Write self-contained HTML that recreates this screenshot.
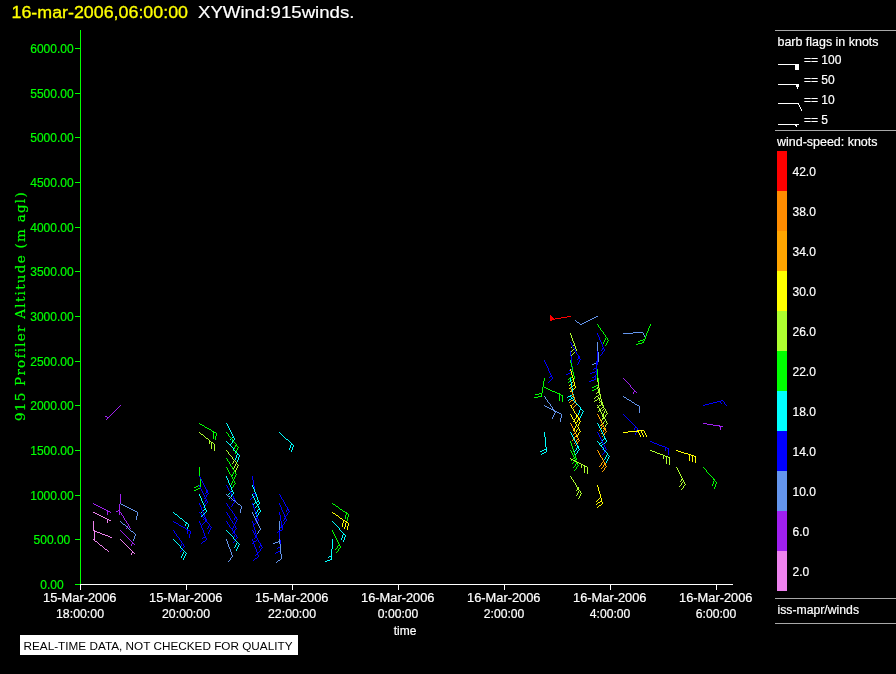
<!DOCTYPE html>
<html><head><meta charset="utf-8"><title>XYWind:915winds</title>
<style>
html,body{margin:0;padding:0;background:#000;}
body{width:896px;height:674px;overflow:hidden;position:relative;font-family:"Liberation Sans",sans-serif;}
svg{position:absolute;left:0;top:0;display:block;will-change:transform;}
text{font-family:"Liberation Sans",sans-serif;font-size:12px;}
.t{fill:#fff;stroke:#fff;stroke-width:0.2px}
.g{fill:#00ff00;stroke:#00ff00;stroke-width:0.2px}
.ser{font-family:"DejaVu Serif","Liberation Serif",serif;}
</style></head><body>
<svg width="896" height="674" viewBox="0 0 896 674">
<rect x="0" y="0" width="896" height="674" fill="#000"/>

<text x="11.5" y="18" textLength="176.5" lengthAdjust="spacingAndGlyphs" style="font-size:17.3px" fill="#ffff00" stroke="#ffff00" stroke-width="0.3">16-mar-2006,06:00:00</text>
<text x="198" y="18" textLength="156.5" lengthAdjust="spacingAndGlyphs" style="font-size:17.3px" fill="#fff" stroke="#fff" stroke-width="0.2">XYWind:915winds.</text>
<g shape-rendering="crispEdges">
<rect x="80" y="30" width="1" height="555" fill="#00ff00"/>
<rect x="75" y="584" width="5" height="1" fill="#00ff00"/>
<rect x="75" y="539" width="5" height="1" fill="#00ff00"/>
<rect x="75" y="495" width="5" height="1" fill="#00ff00"/>
<rect x="75" y="450" width="5" height="1" fill="#00ff00"/>
<rect x="75" y="405" width="5" height="1" fill="#00ff00"/>
<rect x="75" y="361" width="5" height="1" fill="#00ff00"/>
<rect x="75" y="316" width="5" height="1" fill="#00ff00"/>
<rect x="75" y="271" width="5" height="1" fill="#00ff00"/>
<rect x="75" y="227" width="5" height="1" fill="#00ff00"/>
<rect x="75" y="182" width="5" height="1" fill="#00ff00"/>
<rect x="75" y="137" width="5" height="1" fill="#00ff00"/>
<rect x="75" y="93" width="5" height="1" fill="#00ff00"/>
<rect x="75" y="48" width="5" height="1" fill="#00ff00"/>
<rect x="80" y="584" width="653" height="1" fill="#fff"/>
<rect x="80" y="584" width="1" height="6" fill="#fff"/>
<rect x="186" y="584" width="1" height="6" fill="#fff"/>
<rect x="292" y="584" width="1" height="6" fill="#fff"/>
<rect x="398" y="584" width="1" height="6" fill="#fff"/>
<rect x="504" y="584" width="1" height="6" fill="#fff"/>
<rect x="610" y="584" width="1" height="6" fill="#fff"/>
<rect x="716" y="584" width="1" height="6" fill="#fff"/>
</g>
<text class="g" x="51.9" y="588.5" text-anchor="middle">0.00</text>
<text class="g" x="51.9" y="543.5" text-anchor="middle">500.00</text>
<text class="g" x="51.9" y="499.5" text-anchor="middle">1000.00</text>
<text class="g" x="51.9" y="454.5" text-anchor="middle">1500.00</text>
<text class="g" x="51.9" y="409.5" text-anchor="middle">2000.00</text>
<text class="g" x="51.9" y="365.5" text-anchor="middle">2500.00</text>
<text class="g" x="51.9" y="320.5" text-anchor="middle">3000.00</text>
<text class="g" x="51.9" y="275.5" text-anchor="middle">3500.00</text>
<text class="g" x="51.9" y="231.5" text-anchor="middle">4000.00</text>
<text class="g" x="51.9" y="186.5" text-anchor="middle">4500.00</text>
<text class="g" x="51.9" y="141.5" text-anchor="middle">5000.00</text>
<text class="g" x="51.9" y="97.5" text-anchor="middle">5500.00</text>
<text class="g" x="51.9" y="52.5" text-anchor="middle">6000.00</text>
<text class="t" x="43" y="602" textLength="73.5" lengthAdjust="spacingAndGlyphs">15-Mar-2006</text>
<text class="t" x="56.0" y="618" textLength="48.0" lengthAdjust="spacingAndGlyphs">18:00:00</text>
<text class="t" x="149" y="602" textLength="73.5" lengthAdjust="spacingAndGlyphs">15-Mar-2006</text>
<text class="t" x="162.0" y="618" textLength="48.0" lengthAdjust="spacingAndGlyphs">20:00:00</text>
<text class="t" x="255" y="602" textLength="73.5" lengthAdjust="spacingAndGlyphs">15-Mar-2006</text>
<text class="t" x="268.0" y="618" textLength="48.0" lengthAdjust="spacingAndGlyphs">22:00:00</text>
<text class="t" x="361" y="602" textLength="73.5" lengthAdjust="spacingAndGlyphs">16-Mar-2006</text>
<text class="t" x="377.8" y="618" textLength="40.5" lengthAdjust="spacingAndGlyphs">0:00:00</text>
<text class="t" x="467" y="602" textLength="73.5" lengthAdjust="spacingAndGlyphs">16-Mar-2006</text>
<text class="t" x="483.8" y="618" textLength="40.5" lengthAdjust="spacingAndGlyphs">2:00:00</text>
<text class="t" x="573" y="602" textLength="73.5" lengthAdjust="spacingAndGlyphs">16-Mar-2006</text>
<text class="t" x="589.8" y="618" textLength="40.5" lengthAdjust="spacingAndGlyphs">4:00:00</text>
<text class="t" x="679" y="602" textLength="73.5" lengthAdjust="spacingAndGlyphs">16-Mar-2006</text>
<text class="t" x="695.8" y="618" textLength="40.5" lengthAdjust="spacingAndGlyphs">6:00:00</text>
<text class="t" x="405" y="634.5" text-anchor="middle">time</text>
<text class="g ser" transform="translate(25,421) rotate(-90)" style="font-size:13.5px;letter-spacing:0.3px" textLength="229" lengthAdjust="spacing">915 Profiler Altitude (m agl)</text>
<rect x="20" y="635" width="278" height="20" fill="#fff" shape-rendering="crispEdges"/>
<text x="23.5" y="650.2" fill="#000" textLength="269" lengthAdjust="spacingAndGlyphs" style="font-size:10.4px">REAL-TIME DATA, NOT CHECKED FOR QUALITY</text>
<g shape-rendering="crispEdges">
<rect x="775" y="30" width="121" height="1" fill="#a8a8a8"/>
<rect x="775" y="130" width="121" height="1" fill="#a8a8a8"/>
<rect x="775" y="598" width="121" height="1" fill="#a8a8a8"/>
<rect x="775" y="623" width="121" height="1" fill="#a8a8a8"/>
<rect x="777" y="151" width="10" height="40" fill="#ff0000"/>
<rect x="777" y="191" width="10" height="40" fill="#ff8c00"/>
<rect x="777" y="231" width="10" height="40" fill="#ffa500"/>
<rect x="777" y="271" width="10" height="40" fill="#ffff00"/>
<rect x="777" y="311" width="10" height="40" fill="#adff2f"/>
<rect x="777" y="351" width="10" height="40" fill="#00ff00"/>
<rect x="777" y="391" width="10" height="40" fill="#00ffff"/>
<rect x="777" y="431" width="10" height="40" fill="#0000ff"/>
<rect x="777" y="471" width="10" height="40" fill="#6495ed"/>
<rect x="777" y="511" width="10" height="40" fill="#a020f0"/>
<rect x="777" y="551" width="10" height="40" fill="#ee82ee"/>
</g>
<text class="t" x="792.5" y="175.5">42.0</text>
<text class="t" x="792.5" y="215.5">38.0</text>
<text class="t" x="792.5" y="255.5">34.0</text>
<text class="t" x="792.5" y="295.5">30.0</text>
<text class="t" x="792.5" y="335.5">26.0</text>
<text class="t" x="792.5" y="375.5">22.0</text>
<text class="t" x="792.5" y="415.5">18.0</text>
<text class="t" x="792.5" y="455.5">14.0</text>
<text class="t" x="792.5" y="495.5">10.0</text>
<text class="t" x="792.5" y="535.5">6.0</text>
<text class="t" x="792.5" y="575.5">2.0</text>
<text class="t" x="777.5" y="46" textLength="101" lengthAdjust="spacingAndGlyphs">barb flags in knots</text>
<text class="t" x="777" y="146" textLength="100.5" lengthAdjust="spacingAndGlyphs">wind-speed: knots</text>
<text class="t" x="777.5" y="614" textLength="81.5" lengthAdjust="spacingAndGlyphs">iss-mapr/winds</text>
<text class="t" x="804" y="64">== 100</text>
<text class="t" x="804" y="84">== 50</text>
<text class="t" x="804" y="104">== 10</text>
<text class="t" x="804" y="124">== 5</text>
<g shape-rendering="crispEdges" fill="none" stroke-width="1" stroke-linecap="square">
<path fill="#a020f0" d="M93 503h1v1h-1zM94 504h2v1h-2zM96 505h2v1h-2zM98 506h2v1h-2zM100 507h2v1h-2zM102 508h2v1h-2zM104 509h2v1h-2zM106 510h2v1h-2zM107 511h3v1h-3zM107 512h1v1h-1zM110 512h1v1h-1zM107 513h1v1h-1zM107 514h1v1h-1z"/>
<path fill="#ee82ee" d="M93 512h2v1h-2zM95 513h2v1h-2zM97 514h2v1h-2zM99 515h2v1h-2zM101 516h2v1h-2zM103 517h2v1h-2zM105 518h2v1h-2zM107 519h2v1h-2zM107 520h1v1h-1zM109 520h2v1h-2zM107 521h1v1h-1zM107 522h1v1h-1z"/>
<path fill="#ee82ee" d="M93 521h1v1h-1zM93 522h1v1h-1zM93 523h1v1h-1zM93 524h1v1h-1zM93 525h1v1h-1zM93 526h1v1h-1zM93 527h1v1h-1zM93 528h1v1h-1zM93 529h1v1h-1zM93 530h1v1h-1zM94 531h1v1h-1zM94 532h1v1h-1zM94 533h1v1h-1zM94 534h1v1h-1zM94 535h1v1h-1zM94 536h1v1h-1zM94 537h1v1h-1zM94 538h1v1h-1zM94 539h1v1h-1zM94 540h1v1h-1z"/>
<path fill="#ee82ee" d="M93 530h2v1h-2zM95 531h2v1h-2zM97 532h3v1h-3zM100 533h2v1h-2zM102 534h3v1h-3zM105 535h3v1h-3zM108 536h2v1h-2zM110 537h2v1h-2z"/>
<path fill="#ee82ee" d="M93 539h1v1h-1zM94 540h1v1h-1zM95 541h2v1h-2zM97 542h1v1h-1zM98 543h1v1h-1zM99 544h1v1h-1zM100 545h2v1h-2zM102 546h1v1h-1zM103 547h1v1h-1zM104 548h1v1h-1zM105 549h2v1h-2zM107 550h1v1h-1zM108 551h1v1h-1z"/>
<path fill="#a020f0" d="M120 405h1v1h-1zM119 406h1v1h-1zM118 407h1v1h-1zM117 408h1v1h-1zM116 409h1v1h-1zM115 410h1v1h-1zM114 411h1v1h-1zM113 412h1v1h-1zM112 413h1v1h-1zM111 414h1v1h-1zM110 415h1v1h-1zM105 416h2v1h-2zM109 416h1v1h-1zM107 417h2v1h-2zM107 418h1v1h-1zM106 419h1v1h-1z"/>
<path fill="#a020f0" d="M120 494h1v1h-1zM120 495h1v1h-1zM120 496h1v1h-1zM120 497h1v1h-1zM120 498h1v1h-1zM120 499h1v1h-1zM120 500h1v1h-1zM120 501h1v1h-1zM120 502h1v1h-1zM120 503h1v1h-1zM119 504h1v1h-1zM119 505h1v1h-1zM119 506h1v1h-1zM119 507h1v1h-1zM119 508h1v1h-1zM119 509h1v1h-1zM118 510h2v1h-2zM116 511h2v1h-2zM119 511h1v1h-1zM119 512h1v1h-1zM119 513h1v1h-1zM119 514h1v1h-1z"/>
<path fill="#6495ed" d="M120 503h1v1h-1zM121 504h2v1h-2zM123 505h2v1h-2zM125 506h2v1h-2zM127 507h2v1h-2zM129 508h2v1h-2zM131 509h2v1h-2zM133 510h2v1h-2zM135 511h2v1h-2zM137 512h1v1h-1zM137 513h1v1h-1zM137 514h1v1h-1zM137 515h1v1h-1zM136 516h1v1h-1zM136 517h1v1h-1zM136 518h1v1h-1zM136 519h1v1h-1z"/>
<path fill="#a020f0" d="M120 512h1v1h-1zM121 513h1v1h-1zM121 514h1v1h-1zM122 515h1v1h-1zM123 516h1v1h-1zM123 517h1v1h-1zM124 518h1v1h-1zM124 519h1v1h-1zM125 520h1v1h-1zM126 521h1v1h-1zM126 522h1v1h-1zM127 523h1v1h-1zM128 524h1v1h-1zM128 525h1v1h-1zM127 526h1v1h-1zM129 526h1v1h-1zM127 527h1v1h-1zM129 527h1v1h-1zM126 528h1v1h-1zM130 528h1v1h-1z"/>
<path fill="#6495ed" d="M120 521h1v1h-1zM121 522h1v1h-1zM122 523h1v1h-1zM123 524h2v1h-2zM125 525h1v1h-1zM126 526h1v1h-1zM127 527h1v1h-1zM128 528h1v1h-1zM129 529h1v1h-1zM130 530h1v1h-1zM131 531h2v1h-2zM133 532h1v1h-1zM134 533h1v1h-1zM135 534h1v1h-1zM135 535h1v1h-1zM134 536h1v1h-1zM134 537h1v1h-1zM134 538h1v1h-1zM133 539h1v1h-1zM133 540h1v1h-1z"/>
<path fill="#a020f0" d="M120 530h1v1h-1zM121 531h1v1h-1zM122 532h1v1h-1zM123 533h1v1h-1zM124 534h1v1h-1zM125 535h1v1h-1zM126 536h1v1h-1zM127 537h1v1h-1zM128 538h1v1h-1zM129 539h1v1h-1zM130 540h1v1h-1zM131 541h1v1h-1zM132 542h1v1h-1zM132 543h2v1h-2zM131 544h1v1h-1zM134 544h1v1h-1zM131 545h1v1h-1z"/>
<path fill="#ee82ee" d="M120 539h1v1h-1zM121 540h1v1h-1zM122 541h1v1h-1zM123 542h1v1h-1zM124 543h1v1h-1zM125 544h1v1h-1zM126 545h1v1h-1zM127 546h1v1h-1zM128 547h1v1h-1zM129 548h1v1h-1zM130 549h1v1h-1zM131 550h1v1h-1zM132 551h1v1h-1zM132 552h2v1h-2zM131 553h1v1h-1zM134 553h1v1h-1zM131 554h1v1h-1z"/>
<path fill="#00ffff" d="M173 512h1v1h-1zM174 513h1v1h-1zM175 514h2v1h-2zM177 515h1v1h-1zM178 516h1v1h-1zM179 517h1v1h-1zM180 518h2v1h-2zM182 519h1v1h-1zM183 520h1v1h-1zM184 521h1v1h-1zM185 522h2v1h-2zM186 523h2v1h-2zM185 524h1v1h-1zM188 524h1v1h-1zM185 525h1v1h-1zM188 525h1v1h-1zM188 526h1v1h-1zM187 527h1v1h-1zM187 528h1v1h-1zM187 529h1v1h-1zM187 530h1v1h-1z"/>
<path fill="#0000ff" d="M173 521h1v1h-1zM174 522h2v1h-2zM176 523h2v1h-2zM178 524h1v1h-1zM179 525h2v1h-2zM181 526h2v1h-2zM183 527h2v1h-2zM185 528h1v1h-1zM186 529h2v1h-2zM187 530h3v1h-3zM187 531h1v1h-1zM190 531h1v1h-1zM187 532h1v1h-1zM190 532h1v1h-1zM187 533h1v1h-1zM190 533h1v1h-1zM189 534h1v1h-1zM189 535h1v1h-1zM189 536h1v1h-1zM189 537h1v1h-1z"/>
<path fill="#0000ff" d="M173 530h1v1h-1zM174 531h1v1h-1zM174 532h1v1h-1zM175 533h1v1h-1zM176 534h1v1h-1zM176 535h1v1h-1zM177 536h1v1h-1zM178 537h1v1h-1zM179 538h1v1h-1zM179 539h1v1h-1zM180 540h1v1h-1zM181 541h1v1h-1zM181 542h1v1h-1zM182 543h1v1h-1zM181 544h1v1h-1zM183 544h1v1h-1zM181 545h1v1h-1zM183 545h1v1h-1zM180 546h1v1h-1zM184 546h1v1h-1zM183 547h1v1h-1zM182 548h1v1h-1zM182 549h1v1h-1zM181 550h1v1h-1zM180 551h1v1h-1z"/>
<path fill="#00ffff" d="M173 539h1v1h-1zM174 540h1v1h-1zM175 541h1v1h-1zM176 542h1v1h-1zM177 543h1v1h-1zM178 544h1v1h-1zM179 545h1v1h-1zM180 546h1v1h-1zM180 547h1v1h-1zM181 548h1v1h-1zM182 549h1v1h-1zM183 550h1v1h-1zM184 551h1v1h-1zM183 552h1v1h-1zM185 552h1v1h-1zM183 553h1v1h-1zM186 553h1v1h-1zM182 554h1v1h-1zM185 554h1v1h-1zM182 555h1v1h-1zM185 555h1v1h-1zM181 556h1v1h-1zM184 556h1v1h-1zM181 557h1v1h-1zM184 557h1v1h-1zM183 558h1v1h-1zM183 559h1v1h-1z"/>
<path fill="#00ff00" d="M199 423h1v1h-1zM200 424h2v1h-2zM202 425h2v1h-2zM204 426h1v1h-1zM205 427h2v1h-2zM207 428h2v1h-2zM209 429h2v1h-2zM211 430h1v1h-1zM212 431h2v1h-2zM213 432h3v1h-3zM213 433h1v1h-1zM216 433h1v1h-1zM213 434h1v1h-1zM216 434h1v1h-1zM213 435h1v1h-1zM216 435h1v1h-1zM213 436h1v1h-1zM215 436h1v1h-1zM213 437h1v1h-1zM215 437h1v1h-1zM213 438h1v1h-1zM215 438h1v1h-1zM215 439h1v1h-1z"/>
<path fill="#adff2f" d="M199 432h1v1h-1zM200 433h1v1h-1zM201 434h2v1h-2zM203 435h1v1h-1zM204 436h1v1h-1zM205 437h1v1h-1zM206 438h2v1h-2zM208 439h1v1h-1zM209 440h1v1h-1zM209 441h2v1h-2zM209 442h1v1h-1zM211 442h2v1h-2zM209 443h1v1h-1zM211 443h1v1h-1zM213 443h1v1h-1zM211 444h1v1h-1zM214 444h1v1h-1zM211 445h1v1h-1zM214 445h1v1h-1zM211 446h1v1h-1zM214 446h1v1h-1zM211 447h1v1h-1zM214 447h1v1h-1zM211 448h1v1h-1zM214 448h1v1h-1zM214 449h1v1h-1zM214 450h1v1h-1z"/>
<path fill="#00ff00" d="M199 467h1v1h-1zM199 468h1v1h-1zM199 469h1v1h-1zM199 470h1v1h-1zM199 471h1v1h-1zM199 472h1v1h-1zM199 473h1v1h-1zM199 474h1v1h-1zM199 475h1v1h-1zM199 476h1v1h-1zM200 477h1v1h-1zM200 478h1v1h-1zM200 479h1v1h-1zM200 480h1v1h-1zM200 481h1v1h-1zM200 482h1v1h-1zM200 483h1v1h-1zM200 484h1v1h-1zM198 485h3v1h-3zM196 486h2v1h-2zM200 486h1v1h-1zM194 487h2v1h-2zM200 487h1v1h-1zM198 488h2v1h-2zM196 489h2v1h-2zM194 490h2v1h-2z"/>
<path fill="#0000ff" d="M199 476h1v1h-1zM200 477h1v1h-1zM200 478h1v1h-1zM201 479h1v1h-1zM201 480h1v1h-1zM202 481h1v1h-1zM202 482h1v1h-1zM203 483h1v1h-1zM203 484h1v1h-1zM204 485h1v1h-1zM204 486h1v1h-1zM205 487h1v1h-1zM205 488h1v1h-1zM206 489h1v1h-1zM206 490h2v1h-2zM206 491h2v1h-2zM206 492h2v1h-2zM205 493h1v1h-1zM208 493h1v1h-1zM207 494h1v1h-1zM206 495h1v1h-1zM206 496h1v1h-1zM205 497h1v1h-1zM204 498h1v1h-1z"/>
<path fill="#0000ff" d="M199 485h1v1h-1zM199 486h1v1h-1zM200 487h1v1h-1zM200 488h1v1h-1zM201 489h1v1h-1zM201 490h1v1h-1zM202 491h1v1h-1zM202 492h1v1h-1zM203 493h1v1h-1zM203 494h1v1h-1zM204 495h1v1h-1zM204 496h1v1h-1zM205 497h1v1h-1zM205 498h1v1h-1zM206 499h1v1h-1zM205 500h2v1h-2zM205 501h1v1h-1zM207 501h1v1h-1zM204 502h1v1h-1zM207 502h1v1h-1zM206 503h1v1h-1zM205 504h1v1h-1zM205 505h1v1h-1zM204 506h1v1h-1zM203 507h1v1h-1z"/>
<path fill="#00ffff" d="M199 494h1v1h-1zM199 495h1v1h-1zM200 496h1v1h-1zM200 497h1v1h-1zM201 498h1v1h-1zM201 499h1v1h-1zM201 500h1v1h-1zM202 501h1v1h-1zM202 502h1v1h-1zM203 503h1v1h-1zM203 504h1v1h-1zM204 505h1v1h-1zM204 506h1v1h-1zM204 507h1v1h-1zM205 508h1v1h-1zM204 509h2v1h-2zM203 510h1v1h-1zM206 510h1v1h-1zM202 511h1v1h-1zM206 511h1v1h-1zM201 512h1v1h-1zM205 512h1v1h-1zM200 513h1v1h-1zM204 513h1v1h-1zM203 514h1v1h-1zM202 515h1v1h-1zM201 516h1v1h-1z"/>
<path fill="#0000ff" d="M199 503h1v1h-1zM199 504h1v1h-1zM200 505h1v1h-1zM200 506h1v1h-1zM201 507h1v1h-1zM201 508h1v1h-1zM201 509h1v1h-1zM202 510h1v1h-1zM202 511h1v1h-1zM203 512h1v1h-1zM203 513h1v1h-1zM204 514h1v1h-1zM204 515h1v1h-1zM204 516h1v1h-1zM205 517h1v1h-1zM204 518h2v1h-2zM203 519h1v1h-1zM206 519h1v1h-1zM206 520h1v1h-1zM205 521h1v1h-1zM204 522h1v1h-1zM203 523h1v1h-1zM202 524h1v1h-1z"/>
<path fill="#0000ff" d="M199 512h1v1h-1zM200 513h1v1h-1zM201 514h1v1h-1zM201 515h1v1h-1zM202 516h1v1h-1zM203 517h1v1h-1zM204 518h1v1h-1zM205 519h1v1h-1zM205 520h1v1h-1zM206 521h1v1h-1zM207 522h1v1h-1zM208 523h1v1h-1zM209 524h1v1h-1zM209 525h1v1h-1zM208 526h1v1h-1zM210 526h1v1h-1zM208 527h1v1h-1zM211 527h1v1h-1zM207 528h1v1h-1zM210 528h1v1h-1zM210 529h1v1h-1zM209 530h1v1h-1zM209 531h1v1h-1zM208 532h1v1h-1zM208 533h1v1h-1z"/>
<path fill="#0000ff" d="M199 521h1v1h-1zM199 522h1v1h-1zM200 523h1v1h-1zM200 524h1v1h-1zM201 525h1v1h-1zM201 526h1v1h-1zM201 527h1v1h-1zM202 528h1v1h-1zM202 529h1v1h-1zM203 530h1v1h-1zM203 531h1v1h-1zM203 532h1v1h-1zM204 533h1v1h-1zM204 534h1v1h-1zM204 535h1v1h-1zM205 536h1v1h-1zM203 537h3v1h-3zM202 538h1v1h-1zM206 538h1v1h-1zM206 539h1v1h-1zM205 540h1v1h-1zM203 541h2v1h-2zM202 542h1v1h-1zM201 543h1v1h-1z"/>
<path fill="#00ffff" d="M226 423h1v1h-1zM227 424h1v1h-1zM227 425h1v1h-1zM228 426h1v1h-1zM228 427h1v1h-1zM229 428h1v1h-1zM229 429h1v1h-1zM230 430h1v1h-1zM230 431h1v1h-1zM231 432h1v1h-1zM231 433h1v1h-1zM232 434h1v1h-1zM232 435h1v1h-1zM233 436h1v1h-1zM232 437h2v1h-2zM231 438h1v1h-1zM234 438h1v1h-1zM230 439h1v1h-1zM234 439h1v1h-1zM233 440h1v1h-1zM232 441h1v1h-1zM232 442h1v1h-1zM231 443h1v1h-1zM230 444h1v1h-1z"/>
<path fill="#00ff00" d="M226 432h1v1h-1zM227 433h1v1h-1zM228 434h1v1h-1zM228 435h1v1h-1zM229 436h1v1h-1zM230 437h1v1h-1zM231 438h1v1h-1zM232 439h1v1h-1zM232 440h1v1h-1zM233 441h1v1h-1zM234 442h1v1h-1zM235 443h1v1h-1zM236 444h1v1h-1zM235 445h2v1h-2zM235 446h1v1h-1zM237 446h1v1h-1zM234 447h1v1h-1zM238 447h1v1h-1zM234 448h1v1h-1zM237 448h1v1h-1zM233 449h1v1h-1zM237 449h1v1h-1zM233 450h1v1h-1zM236 450h1v1h-1zM236 451h1v1h-1zM235 452h1v1h-1zM235 453h1v1h-1z"/>
<path fill="#00ffff" d="M226 441h1v1h-1zM227 442h1v1h-1zM228 443h1v1h-1zM229 444h1v1h-1zM230 445h1v1h-1zM231 446h1v1h-1zM232 447h1v1h-1zM233 448h1v1h-1zM233 449h1v1h-1zM234 450h1v1h-1zM235 451h1v1h-1zM236 452h1v1h-1zM237 453h1v1h-1zM237 454h2v1h-2zM236 455h1v1h-1zM239 455h1v1h-1zM236 456h1v1h-1zM239 456h1v1h-1zM236 457h1v1h-1zM238 457h1v1h-1zM235 458h1v1h-1zM238 458h1v1h-1zM235 459h1v1h-1zM238 459h1v1h-1zM237 460h1v1h-1zM237 461h1v1h-1z"/>
<path fill="#adff2f" d="M226 450h1v1h-1zM227 451h1v1h-1zM228 452h1v1h-1zM228 453h1v1h-1zM229 454h1v1h-1zM230 455h1v1h-1zM231 456h1v1h-1zM232 457h1v1h-1zM232 458h1v1h-1zM233 459h1v1h-1zM234 460h1v1h-1zM233 461h1v1h-1zM235 461h1v1h-1zM233 462h1v1h-1zM236 462h1v1h-1zM232 463h1v1h-1zM236 463h1v1h-1zM235 464h1v1h-1zM237 464h1v1h-1zM235 465h1v1h-1zM238 465h1v1h-1zM234 466h1v1h-1zM237 466h1v1h-1zM234 467h1v1h-1zM237 467h1v1h-1zM233 468h1v1h-1zM236 468h1v1h-1zM236 469h1v1h-1zM235 470h1v1h-1zM235 471h1v1h-1z"/>
<path fill="#00ff00" d="M226 458h1v1h-1zM227 459h1v1h-1zM227 460h1v1h-1zM228 461h1v1h-1zM229 462h1v1h-1zM229 463h1v1h-1zM230 464h1v1h-1zM230 465h1v1h-1zM231 466h1v1h-1zM232 467h1v1h-1zM232 468h1v1h-1zM233 469h1v1h-1zM234 470h1v1h-1zM234 471h1v1h-1zM233 472h1v1h-1zM235 472h1v1h-1zM233 473h1v1h-1zM235 473h1v1h-1zM232 474h1v1h-1zM236 474h1v1h-1zM232 475h1v1h-1zM235 475h1v1h-1zM231 476h1v1h-1zM235 476h1v1h-1zM234 477h1v1h-1zM234 478h1v1h-1zM233 479h1v1h-1z"/>
<path fill="#00ff00" d="M226 467h1v1h-1zM227 468h1v1h-1zM227 469h1v1h-1zM228 470h1v1h-1zM228 471h1v1h-1zM229 472h1v1h-1zM229 473h1v1h-1zM230 474h1v1h-1zM231 475h1v1h-1zM231 476h1v1h-1zM232 477h1v1h-1zM232 478h1v1h-1zM233 479h1v1h-1zM233 480h1v1h-1zM232 481h1v1h-1zM234 481h1v1h-1zM232 482h1v1h-1zM234 482h1v1h-1zM231 483h1v1h-1zM235 483h1v1h-1zM231 484h1v1h-1zM234 484h1v1h-1zM230 485h1v1h-1zM233 485h1v1h-1zM233 486h1v1h-1zM232 487h1v1h-1zM231 488h1v1h-1z"/>
<path fill="#00ffff" d="M226 476h1v1h-1zM226 477h1v1h-1zM227 478h1v1h-1zM227 479h1v1h-1zM228 480h1v1h-1zM228 481h1v1h-1zM228 482h1v1h-1zM229 483h1v1h-1zM229 484h1v1h-1zM230 485h1v1h-1zM230 486h1v1h-1zM231 487h1v1h-1zM231 488h1v1h-1zM231 489h1v1h-1zM232 490h1v1h-1zM231 491h2v1h-2zM230 492h1v1h-1zM233 492h1v1h-1zM229 493h1v1h-1zM233 493h1v1h-1zM228 494h1v1h-1zM232 494h1v1h-1zM227 495h1v1h-1zM231 495h1v1h-1zM231 496h1v1h-1zM230 497h1v1h-1zM229 498h1v1h-1z"/>
<path fill="#0000ff" d="M226 485h1v1h-1zM227 486h1v1h-1zM227 487h1v1h-1zM228 488h1v1h-1zM228 489h1v1h-1zM229 490h1v1h-1zM230 491h1v1h-1zM230 492h1v1h-1zM231 493h1v1h-1zM231 494h1v1h-1zM232 495h1v1h-1zM233 496h1v1h-1zM233 497h1v1h-1zM233 498h2v1h-2zM232 499h1v1h-1zM234 499h1v1h-1zM231 500h1v1h-1zM235 500h1v1h-1zM234 501h1v1h-1zM234 502h1v1h-1zM233 503h1v1h-1zM232 504h1v1h-1zM232 505h1v1h-1zM231 506h1v1h-1z"/>
<path fill="#6495ed" d="M226 494h1v1h-1zM227 495h1v1h-1zM228 496h2v1h-2zM230 497h1v1h-1zM231 498h1v1h-1zM232 499h1v1h-1zM233 500h2v1h-2zM235 501h1v1h-1zM236 502h1v1h-1zM237 503h1v1h-1zM238 504h2v1h-2zM240 505h1v1h-1zM241 506h1v1h-1zM241 507h1v1h-1zM241 508h1v1h-1zM240 509h1v1h-1zM240 510h1v1h-1zM240 511h1v1h-1zM240 512h1v1h-1z"/>
<path fill="#0000ff" d="M226 503h1v1h-1zM227 504h1v1h-1zM227 505h1v1h-1zM228 506h1v1h-1zM229 507h1v1h-1zM229 508h1v1h-1zM230 509h1v1h-1zM231 510h1v1h-1zM232 511h1v1h-1zM232 512h1v1h-1zM233 513h1v1h-1zM234 514h1v1h-1zM234 515h1v1h-1zM235 516h1v1h-1zM235 517h2v1h-2zM234 518h1v1h-1zM236 518h1v1h-1zM234 519h1v1h-1zM237 519h1v1h-1zM236 520h1v1h-1zM236 521h1v1h-1zM235 522h1v1h-1zM235 523h1v1h-1zM234 524h1v1h-1zM234 525h1v1h-1z"/>
<path fill="#0000ff" d="M226 512h1v1h-1zM227 513h1v1h-1zM227 514h1v1h-1zM228 515h1v1h-1zM229 516h1v1h-1zM229 517h1v1h-1zM230 518h1v1h-1zM230 519h1v1h-1zM231 520h1v1h-1zM232 521h1v1h-1zM232 522h1v1h-1zM233 523h1v1h-1zM234 524h1v1h-1zM234 525h1v1h-1zM233 526h1v1h-1zM235 526h1v1h-1zM233 527h1v1h-1zM235 527h1v1h-1zM232 528h1v1h-1zM236 528h1v1h-1zM235 529h1v1h-1zM234 530h1v1h-1zM234 531h1v1h-1zM233 532h1v1h-1zM232 533h1v1h-1z"/>
<path fill="#0000ff" d="M226 521h1v1h-1zM227 522h1v1h-1zM227 523h1v1h-1zM228 524h1v1h-1zM229 525h1v1h-1zM229 526h1v1h-1zM230 527h1v1h-1zM231 528h1v1h-1zM232 529h1v1h-1zM232 530h1v1h-1zM233 531h1v1h-1zM234 532h1v1h-1zM234 533h1v1h-1zM235 534h1v1h-1zM234 535h1v1h-1zM236 535h1v1h-1zM234 536h1v1h-1zM236 536h1v1h-1zM233 537h1v1h-1zM237 537h1v1h-1zM236 538h1v1h-1zM235 539h1v1h-1zM235 540h1v1h-1zM234 541h1v1h-1zM233 542h1v1h-1z"/>
<path fill="#00ffff" d="M226 530h1v1h-1zM227 531h1v1h-1zM228 532h1v1h-1zM229 533h1v1h-1zM230 534h1v1h-1zM231 535h1v1h-1zM232 536h1v1h-1zM233 537h1v1h-1zM233 538h1v1h-1zM234 539h1v1h-1zM235 540h1v1h-1zM236 541h1v1h-1zM237 542h1v1h-1zM236 543h1v1h-1zM238 543h1v1h-1zM236 544h1v1h-1zM239 544h1v1h-1zM235 545h1v1h-1zM238 545h1v1h-1zM235 546h1v1h-1zM238 546h1v1h-1zM234 547h1v1h-1zM237 547h1v1h-1zM237 548h1v1h-1zM236 549h1v1h-1zM236 550h1v1h-1z"/>
<path fill="#6495ed" d="M226 539h1v1h-1zM226 540h1v1h-1zM227 541h1v1h-1zM227 542h1v1h-1zM227 543h1v1h-1zM228 544h1v1h-1zM228 545h1v1h-1zM228 546h1v1h-1zM229 547h1v1h-1zM229 548h1v1h-1zM230 549h1v1h-1zM230 550h1v1h-1zM230 551h1v1h-1zM231 552h1v1h-1zM231 553h1v1h-1zM231 554h1v1h-1zM232 555h1v1h-1zM232 556h1v1h-1zM231 557h1v1h-1zM230 558h1v1h-1zM230 559h1v1h-1zM229 560h1v1h-1zM228 561h1v1h-1z"/>
<path fill="#0000ff" d="M252 476h1v1h-1zM252 477h1v1h-1zM252 478h1v1h-1zM252 479h1v1h-1zM253 480h1v1h-1zM253 481h1v1h-1zM253 482h1v1h-1zM253 483h1v1h-1zM253 484h1v1h-1zM253 485h1v1h-1zM254 486h1v1h-1zM254 487h1v1h-1zM254 488h1v1h-1zM254 489h1v1h-1zM254 490h1v1h-1zM254 491h1v1h-1zM255 492h1v1h-1zM253 493h3v1h-3zM252 494h1v1h-1zM255 494h1v1h-1zM255 495h1v1h-1zM254 496h1v1h-1zM252 497h2v1h-2zM251 498h1v1h-1zM250 499h1v1h-1z"/>
<path fill="#00ffff" d="M252 485h1v1h-1zM252 486h1v1h-1zM253 487h1v1h-1zM253 488h1v1h-1zM254 489h1v1h-1zM254 490h1v1h-1zM254 491h1v1h-1zM255 492h1v1h-1zM255 493h1v1h-1zM256 494h1v1h-1zM256 495h1v1h-1zM256 496h1v1h-1zM257 497h1v1h-1zM257 498h1v1h-1zM257 499h1v1h-1zM258 500h1v1h-1zM257 501h2v1h-2zM255 502h2v1h-2zM259 502h1v1h-1zM254 503h1v1h-1zM259 503h1v1h-1zM253 504h1v1h-1zM258 504h1v1h-1zM257 505h1v1h-1zM256 506h1v1h-1zM255 507h1v1h-1z"/>
<path fill="#00ffff" d="M252 494h1v1h-1zM252 495h1v1h-1zM253 496h1v1h-1zM253 497h1v1h-1zM254 498h1v1h-1zM254 499h1v1h-1zM255 500h1v1h-1zM255 501h1v1h-1zM256 502h1v1h-1zM256 503h1v1h-1zM257 504h1v1h-1zM257 505h1v1h-1zM258 506h1v1h-1zM258 507h1v1h-1zM259 508h1v1h-1zM258 509h2v1h-2zM257 510h1v1h-1zM260 510h1v1h-1zM257 511h1v1h-1zM260 511h1v1h-1zM256 512h1v1h-1zM259 512h1v1h-1zM255 513h1v1h-1zM258 513h1v1h-1zM258 514h1v1h-1zM257 515h1v1h-1zM256 516h1v1h-1z"/>
<path fill="#0000ff" d="M252 503h1v1h-1zM252 504h1v1h-1zM253 505h1v1h-1zM253 506h1v1h-1zM253 507h1v1h-1zM254 508h1v1h-1zM254 509h1v1h-1zM254 510h1v1h-1zM255 511h1v1h-1zM255 512h1v1h-1zM256 513h1v1h-1zM256 514h1v1h-1zM256 515h1v1h-1zM257 516h1v1h-1zM257 517h1v1h-1zM256 518h2v1h-2zM256 519h1v1h-1zM258 519h1v1h-1zM255 520h1v1h-1zM258 520h1v1h-1zM257 521h1v1h-1zM256 522h1v1h-1zM255 523h1v1h-1zM254 524h1v1h-1zM253 525h1v1h-1z"/>
<path fill="#6495ed" d="M252 512h1v1h-1zM252 513h1v1h-1zM253 514h1v1h-1zM253 515h1v1h-1zM254 516h1v1h-1zM254 517h1v1h-1zM255 518h1v1h-1zM255 519h1v1h-1zM256 520h1v1h-1zM256 521h1v1h-1zM257 522h1v1h-1zM257 523h1v1h-1zM258 524h1v1h-1zM258 525h1v1h-1zM259 526h1v1h-1zM259 527h1v1h-1zM260 528h1v1h-1zM260 529h1v1h-1zM259 530h1v1h-1zM258 531h1v1h-1zM258 532h1v1h-1zM257 533h1v1h-1zM256 534h1v1h-1z"/>
<path fill="#0000ff" d="M252 521h1v1h-1zM252 522h1v1h-1zM253 523h1v1h-1zM253 524h1v1h-1zM253 525h1v1h-1zM253 526h1v1h-1zM254 527h1v1h-1zM254 528h1v1h-1zM254 529h1v1h-1zM255 530h1v1h-1zM255 531h1v1h-1zM255 532h1v1h-1zM255 533h1v1h-1zM256 534h1v1h-1zM256 535h1v1h-1zM255 536h2v1h-2zM255 537h2v1h-2zM254 538h1v1h-1zM257 538h1v1h-1zM257 539h1v1h-1zM256 540h1v1h-1zM254 541h2v1h-2zM253 542h1v1h-1zM252 543h1v1h-1z"/>
<path fill="#0000ff" d="M252 530h1v1h-1zM253 531h1v1h-1zM253 532h1v1h-1zM254 533h1v1h-1zM254 534h1v1h-1zM255 535h1v1h-1zM256 536h1v1h-1zM256 537h1v1h-1zM257 538h1v1h-1zM257 539h1v1h-1zM258 540h1v1h-1zM258 541h1v1h-1zM259 542h1v1h-1zM260 543h1v1h-1zM260 544h1v1h-1zM260 545h2v1h-2zM259 546h1v1h-1zM261 546h1v1h-1zM259 547h1v1h-1zM262 547h1v1h-1zM261 548h1v1h-1zM260 549h1v1h-1zM260 550h1v1h-1zM259 551h1v1h-1zM258 552h1v1h-1z"/>
<path fill="#0000ff" d="M252 539h1v1h-1zM252 540h1v1h-1zM253 541h1v1h-1zM253 542h1v1h-1zM253 543h1v1h-1zM254 544h1v1h-1zM254 545h1v1h-1zM254 546h1v1h-1zM255 547h1v1h-1zM255 548h1v1h-1zM256 549h1v1h-1zM256 550h1v1h-1zM256 551h1v1h-1zM257 552h1v1h-1zM257 553h1v1h-1zM256 554h2v1h-2zM255 555h1v1h-1zM258 555h1v1h-1zM258 556h1v1h-1zM257 557h1v1h-1zM255 558h2v1h-2zM254 559h1v1h-1zM253 560h1v1h-1z"/>
<path fill="#00ffff" d="M279 432h1v1h-1zM280 433h1v1h-1zM281 434h1v1h-1zM282 435h1v1h-1zM283 436h1v1h-1zM284 437h1v1h-1zM285 438h1v1h-1zM286 439h2v1h-2zM288 440h1v1h-1zM289 441h1v1h-1zM290 442h1v1h-1zM291 443h1v1h-1zM291 444h2v1h-2zM290 445h1v1h-1zM293 445h1v1h-1zM290 446h1v1h-1zM293 446h1v1h-1zM290 447h1v1h-1zM292 447h1v1h-1zM289 448h1v1h-1zM292 448h1v1h-1zM289 449h1v1h-1zM292 449h1v1h-1zM291 450h1v1h-1zM291 451h1v1h-1z"/>
<path fill="#0000ff" d="M279 494h1v1h-1zM280 495h1v1h-1zM280 496h1v1h-1zM281 497h1v1h-1zM281 498h1v1h-1zM282 499h1v1h-1zM283 500h1v1h-1zM283 501h1v1h-1zM284 502h1v1h-1zM284 503h1v1h-1zM285 504h1v1h-1zM285 505h1v1h-1zM286 506h1v1h-1zM287 507h1v1h-1zM287 508h1v1h-1zM287 509h2v1h-2zM286 510h1v1h-1zM288 510h1v1h-1zM286 511h1v1h-1zM289 511h1v1h-1zM288 512h1v1h-1zM287 513h1v1h-1zM287 514h1v1h-1zM286 515h1v1h-1zM285 516h1v1h-1z"/>
<path fill="#0000ff" d="M279 503h1v1h-1zM279 504h1v1h-1zM280 505h1v1h-1zM280 506h1v1h-1zM281 507h1v1h-1zM281 508h1v1h-1zM281 509h1v1h-1zM282 510h1v1h-1zM282 511h1v1h-1zM283 512h1v1h-1zM283 513h1v1h-1zM284 514h1v1h-1zM284 515h1v1h-1zM284 516h1v1h-1zM285 517h1v1h-1zM284 518h2v1h-2zM284 519h1v1h-1zM286 519h1v1h-1zM283 520h1v1h-1zM286 520h1v1h-1zM285 521h1v1h-1zM284 522h1v1h-1zM284 523h1v1h-1zM283 524h1v1h-1zM282 525h1v1h-1z"/>
<path fill="#0000ff" d="M279 512h1v1h-1zM279 513h1v1h-1zM279 514h1v1h-1zM280 515h1v1h-1zM280 516h1v1h-1zM280 517h1v1h-1zM280 518h1v1h-1zM280 519h1v1h-1zM280 520h1v1h-1zM281 521h1v1h-1zM281 522h1v1h-1zM281 523h1v1h-1zM281 524h1v1h-1zM281 525h1v1h-1zM281 526h2v1h-2zM280 527h3v1h-3zM279 528h1v1h-1zM282 528h1v1h-1zM282 529h1v1h-1zM280 530h2v1h-2zM278 531h2v1h-2zM277 532h1v1h-1z"/>
<path fill="#6495ed" d="M279 521h1v1h-1zM279 522h1v1h-1zM279 523h1v1h-1zM279 524h1v1h-1zM279 525h1v1h-1zM279 526h1v1h-1zM279 527h1v1h-1zM279 528h1v1h-1zM279 529h1v1h-1zM279 530h1v1h-1zM279 531h1v1h-1zM279 532h1v1h-1zM279 533h1v1h-1zM279 534h1v1h-1zM279 535h1v1h-1zM279 536h1v1h-1zM279 537h1v1h-1zM279 538h1v1h-1zM279 539h1v1h-1zM279 540h1v1h-1zM278 541h2v1h-2zM275 542h3v1h-3zM273 543h2v1h-2z"/>
<path fill="#0000ff" d="M279 530h1v1h-1zM279 531h1v1h-1zM279 532h1v1h-1zM279 533h1v1h-1zM279 534h1v1h-1zM279 535h1v1h-1zM279 536h1v1h-1zM279 537h1v1h-1zM279 538h1v1h-1zM279 539h1v1h-1zM280 540h1v1h-1zM280 541h1v1h-1zM280 542h1v1h-1zM280 543h1v1h-1zM280 544h1v1h-1zM280 545h1v1h-1zM280 546h1v1h-1zM278 547h3v1h-3zM277 548h1v1h-1zM280 548h1v1h-1zM280 549h1v1h-1zM280 550h1v1h-1zM278 551h2v1h-2zM276 552h2v1h-2zM275 553h1v1h-1z"/>
<path fill="#6495ed" d="M279 539h1v1h-1zM279 540h1v1h-1zM279 541h1v1h-1zM279 542h1v1h-1zM279 543h1v1h-1zM280 544h1v1h-1zM280 545h1v1h-1zM280 546h1v1h-1zM280 547h1v1h-1zM280 548h1v1h-1zM280 549h1v1h-1zM280 550h1v1h-1zM280 551h1v1h-1zM280 552h1v1h-1zM280 553h1v1h-1zM281 554h1v1h-1zM281 555h1v1h-1zM281 556h1v1h-1zM281 557h1v1h-1zM281 558h1v1h-1zM280 559h1v1h-1zM278 560h2v1h-2zM277 561h1v1h-1zM276 562h1v1h-1z"/>
<path fill="#00ff00" d="M332 503h1v1h-1zM333 504h2v1h-2zM335 505h1v1h-1zM336 506h2v1h-2zM338 507h1v1h-1zM339 508h1v1h-1zM340 509h2v1h-2zM342 510h1v1h-1zM343 511h2v1h-2zM345 512h2v1h-2zM346 513h2v1h-2zM346 514h1v1h-1zM348 514h1v1h-1zM345 515h1v1h-1zM348 515h1v1h-1zM345 516h1v1h-1zM348 516h1v1h-1zM345 517h1v1h-1zM347 517h1v1h-1zM345 518h1v1h-1zM347 518h1v1h-1zM347 519h1v1h-1zM347 520h1v1h-1z"/>
<path fill="#ffff00" d="M332 512h1v1h-1zM333 513h2v1h-2zM335 514h1v1h-1zM336 515h2v1h-2zM338 516h1v1h-1zM339 517h1v1h-1zM340 518h2v1h-2zM342 519h1v1h-1zM343 520h2v1h-2zM343 521h1v1h-1zM345 521h2v1h-2zM343 522h1v1h-1zM346 522h2v1h-2zM342 523h1v1h-1zM345 523h1v1h-1zM348 523h1v1h-1zM342 524h1v1h-1zM345 524h1v1h-1zM348 524h1v1h-1zM342 525h1v1h-1zM345 525h1v1h-1zM348 525h1v1h-1zM342 526h1v1h-1zM345 526h1v1h-1zM347 526h1v1h-1zM344 527h1v1h-1zM347 527h1v1h-1zM344 528h1v1h-1zM347 528h1v1h-1zM347 529h1v1h-1z"/>
<path fill="#00ffff" d="M332 521h1v1h-1zM333 522h1v1h-1zM334 523h1v1h-1zM335 524h1v1h-1zM336 525h1v1h-1zM337 526h1v1h-1zM338 527h1v1h-1zM339 528h1v1h-1zM339 529h1v1h-1zM340 530h1v1h-1zM341 531h1v1h-1zM342 532h1v1h-1zM343 533h1v1h-1zM343 534h2v1h-2zM342 535h1v1h-1zM345 535h1v1h-1zM342 536h1v1h-1zM345 536h1v1h-1zM342 537h1v1h-1zM344 537h1v1h-1zM341 538h1v1h-1zM344 538h1v1h-1zM341 539h1v1h-1zM344 539h1v1h-1zM343 540h1v1h-1zM343 541h1v1h-1z"/>
<path fill="#00ff00" d="M332 530h1v1h-1zM332 531h1v1h-1zM333 532h1v1h-1zM333 533h1v1h-1zM334 534h1v1h-1zM334 535h1v1h-1zM335 536h1v1h-1zM335 537h1v1h-1zM336 538h1v1h-1zM336 539h1v1h-1zM337 540h1v1h-1zM337 541h1v1h-1zM338 542h1v1h-1zM338 543h1v1h-1zM339 544h1v1h-1zM338 545h2v1h-2zM337 546h1v1h-1zM340 546h1v1h-1zM337 547h1v1h-1zM340 547h1v1h-1zM336 548h1v1h-1zM339 548h1v1h-1zM335 549h1v1h-1zM338 549h1v1h-1zM338 550h1v1h-1zM337 551h1v1h-1zM336 552h1v1h-1z"/>
<path fill="#00ffff" d="M332 539h1v1h-1zM332 540h1v1h-1zM332 541h1v1h-1zM332 542h1v1h-1zM332 543h1v1h-1zM332 544h1v1h-1zM332 545h1v1h-1zM332 546h1v1h-1zM332 547h1v1h-1zM332 548h1v1h-1zM331 549h1v1h-1zM331 550h1v1h-1zM331 551h1v1h-1zM331 552h1v1h-1zM331 553h1v1h-1zM331 554h1v1h-1zM331 555h1v1h-1zM329 556h3v1h-3zM328 557h1v1h-1zM331 557h1v1h-1zM331 558h1v1h-1zM330 559h2v1h-2zM327 560h3v1h-3zM325 561h2v1h-2z"/>
<path fill="#0000ff" d="M544 360h1v1h-1zM544 361h1v1h-1zM545 362h1v1h-1zM545 363h1v1h-1zM546 364h1v1h-1zM546 365h1v1h-1zM547 366h1v1h-1zM547 367h1v1h-1zM548 368h1v1h-1zM548 369h1v1h-1zM548 370h1v1h-1zM549 371h1v1h-1zM549 372h1v1h-1zM550 373h1v1h-1zM550 374h1v1h-1zM551 375h1v1h-1zM550 376h2v1h-2zM549 377h1v1h-1zM552 377h1v1h-1zM552 378h1v1h-1zM551 379h1v1h-1zM550 380h1v1h-1zM549 381h1v1h-1zM548 382h1v1h-1z"/>
<path fill="#00ff00" d="M544 378h1v1h-1zM544 379h1v1h-1zM544 380h1v1h-1zM543 381h1v1h-1zM543 382h1v1h-1zM543 383h1v1h-1zM543 384h1v1h-1zM543 385h1v1h-1zM543 386h1v1h-1zM542 387h1v1h-1zM542 388h1v1h-1zM542 389h1v1h-1zM542 390h1v1h-1zM542 391h1v1h-1zM542 392h1v1h-1zM539 393h3v1h-3zM535 394h4v1h-4zM541 394h1v1h-1zM541 395h1v1h-1zM538 396h4v1h-4zM534 397h4v1h-4z"/>
<path fill="#00ff00" d="M544 387h2v1h-2zM546 388h2v1h-2zM548 389h2v1h-2zM550 390h2v1h-2zM552 391h3v1h-3zM555 392h2v1h-2zM557 393h3v1h-3zM559 394h2v1h-2zM559 395h1v1h-1zM561 395h2v1h-2zM559 396h1v1h-1zM562 396h1v1h-1zM559 397h1v1h-1zM562 397h1v1h-1zM559 398h1v1h-1zM562 398h1v1h-1zM559 399h1v1h-1zM562 399h1v1h-1zM559 400h1v1h-1zM562 400h1v1h-1zM562 401h1v1h-1z"/>
<path fill="#6495ed" d="M544 396h1v1h-1zM545 397h1v1h-1zM545 398h1v1h-1zM546 399h1v1h-1zM547 400h1v1h-1zM547 401h1v1h-1zM548 402h1v1h-1zM549 403h1v1h-1zM550 404h1v1h-1zM550 405h1v1h-1zM551 406h1v1h-1zM552 407h1v1h-1zM552 408h1v1h-1zM553 409h1v1h-1zM554 410h1v1h-1zM554 411h1v1h-1zM555 412h1v1h-1zM554 413h1v1h-1zM554 414h1v1h-1zM553 415h1v1h-1zM553 416h1v1h-1zM552 417h1v1h-1zM552 418h1v1h-1z"/>
<path fill="#6495ed" d="M544 405h1v1h-1zM545 406h2v1h-2zM547 407h2v1h-2zM549 408h2v1h-2zM551 409h2v1h-2zM553 410h2v1h-2zM555 411h2v1h-2zM557 412h2v1h-2zM559 413h2v1h-2zM561 414h1v1h-1zM561 415h1v1h-1zM561 416h1v1h-1zM561 417h1v1h-1zM560 418h1v1h-1zM560 419h1v1h-1zM560 420h1v1h-1zM560 421h1v1h-1z"/>
<path fill="#00ffff" d="M544 432h1v1h-1zM544 433h1v1h-1zM544 434h1v1h-1zM544 435h1v1h-1zM544 436h1v1h-1zM545 437h1v1h-1zM545 438h1v1h-1zM545 439h1v1h-1zM545 440h1v1h-1zM545 441h1v1h-1zM545 442h1v1h-1zM545 443h1v1h-1zM545 444h1v1h-1zM545 445h1v1h-1zM545 446h1v1h-1zM546 447h1v1h-1zM546 448h1v1h-1zM544 449h3v1h-3zM542 450h2v1h-2zM546 450h1v1h-1zM540 451h2v1h-2zM546 451h1v1h-1zM544 452h2v1h-2zM542 453h2v1h-2zM541 454h1v1h-1z"/>
<path fill="#adff2f" d="M570 333h1v1h-1zM570 334h1v1h-1zM571 335h1v1h-1zM571 336h1v1h-1zM571 337h1v1h-1zM572 338h1v1h-1zM572 339h1v1h-1zM572 340h1v1h-1zM573 341h1v1h-1zM573 342h1v1h-1zM574 343h1v1h-1zM574 344h1v1h-1zM573 345h2v1h-2zM572 346h1v1h-1zM575 346h1v1h-1zM571 347h1v1h-1zM575 347h1v1h-1zM574 348h2v1h-2zM573 349h1v1h-1zM576 349h1v1h-1zM572 350h1v1h-1zM576 350h1v1h-1zM571 351h1v1h-1zM575 351h1v1h-1zM570 352h1v1h-1zM574 352h1v1h-1zM573 353h1v1h-1zM572 354h1v1h-1zM571 355h1v1h-1z"/>
<path fill="#0000ff" d="M570 342h1v1h-1zM571 343h1v1h-1zM571 344h1v1h-1zM572 345h1v1h-1zM572 346h1v1h-1zM573 347h1v1h-1zM574 348h1v1h-1zM574 349h1v1h-1zM575 350h1v1h-1zM575 351h1v1h-1zM576 352h1v1h-1zM576 353h1v1h-1zM577 354h1v1h-1zM578 355h1v1h-1zM578 356h2v1h-2zM578 357h2v1h-2zM578 358h2v1h-2zM577 359h1v1h-1zM580 359h1v1h-1zM579 360h1v1h-1zM579 361h1v1h-1zM578 362h1v1h-1zM578 363h1v1h-1zM577 364h1v1h-1z"/>
<path fill="#0000ff" d="M570 351h1v1h-1zM570 352h1v1h-1zM570 353h1v1h-1zM570 354h1v1h-1zM570 355h1v1h-1zM571 356h1v1h-1zM571 357h1v1h-1zM571 358h1v1h-1zM571 359h1v1h-1zM571 360h1v1h-1zM571 361h1v1h-1zM571 362h1v1h-1zM571 363h1v1h-1zM571 364h1v1h-1zM571 365h1v1h-1zM572 366h1v1h-1zM572 367h1v1h-1zM572 368h1v1h-1zM570 369h3v1h-3zM569 370h1v1h-1zM572 370h1v1h-1zM572 371h1v1h-1zM570 372h2v1h-2zM568 373h2v1h-2zM566 374h2v1h-2z"/>
<path fill="#00ff00" d="M570 360h1v1h-1zM570 361h1v1h-1zM570 362h1v1h-1zM571 363h1v1h-1zM571 364h1v1h-1zM571 365h1v1h-1zM571 366h1v1h-1zM572 367h1v1h-1zM572 368h1v1h-1zM572 369h1v1h-1zM572 370h1v1h-1zM572 371h1v1h-1zM573 372h1v1h-1zM573 373h1v1h-1zM573 374h1v1h-1zM573 375h1v1h-1zM572 376h1v1h-1zM574 376h1v1h-1zM570 377h2v1h-2zM574 377h1v1h-1zM569 378h1v1h-1zM574 378h1v1h-1zM568 379h1v1h-1zM572 379h2v1h-2zM571 380h1v1h-1zM569 381h2v1h-2zM568 382h1v1h-1z"/>
<path fill="#ffff00" d="M570 369h1v1h-1zM570 370h1v1h-1zM571 371h1v1h-1zM571 372h1v1h-1zM571 373h1v1h-1zM571 374h1v1h-1zM572 375h1v1h-1zM572 376h1v1h-1zM572 377h1v1h-1zM573 378h1v1h-1zM573 379h1v1h-1zM573 380h1v1h-1zM573 381h1v1h-1zM572 382h1v1h-1zM574 382h1v1h-1zM571 383h1v1h-1zM574 383h1v1h-1zM570 384h1v1h-1zM574 384h1v1h-1zM569 385h1v1h-1zM573 385h2v1h-2zM571 386h2v1h-2zM575 386h1v1h-1zM570 387h1v1h-1zM575 387h1v1h-1zM569 388h1v1h-1zM574 388h1v1h-1zM572 389h2v1h-2zM571 390h1v1h-1zM570 391h1v1h-1z"/>
<path fill="#00ffff" d="M570 378h1v1h-1zM570 379h1v1h-1zM570 380h1v1h-1zM570 381h1v1h-1zM571 382h1v1h-1zM571 383h1v1h-1zM571 384h1v1h-1zM571 385h1v1h-1zM571 386h1v1h-1zM571 387h1v1h-1zM572 388h1v1h-1zM572 389h1v1h-1zM572 390h1v1h-1zM572 391h1v1h-1zM572 392h1v1h-1zM572 393h1v1h-1zM572 394h2v1h-2zM570 395h2v1h-2zM573 395h1v1h-1zM568 396h2v1h-2zM573 396h1v1h-1zM567 397h1v1h-1zM573 397h1v1h-1zM571 398h2v1h-2zM569 399h2v1h-2zM568 400h1v1h-1z"/>
<path fill="#ffa500" d="M570 387h1v1h-1zM570 388h1v1h-1zM571 389h1v1h-1zM571 390h1v1h-1zM571 391h1v1h-1zM572 392h1v1h-1zM572 393h1v1h-1zM572 394h1v1h-1zM573 395h1v1h-1zM572 396h2v1h-2zM571 397h1v1h-1zM574 397h1v1h-1zM574 398h1v1h-1zM573 399h2v1h-2zM571 400h2v1h-2zM575 400h1v1h-1zM570 401h1v1h-1zM575 401h1v1h-1zM569 402h1v1h-1zM574 402h2v1h-2zM573 403h1v1h-1zM576 403h1v1h-1zM572 404h1v1h-1zM576 404h1v1h-1zM571 405h1v1h-1zM575 405h1v1h-1zM574 406h1v1h-1zM573 407h1v1h-1zM572 408h1v1h-1z"/>
<path fill="#00ffff" d="M570 396h1v1h-1zM571 397h1v1h-1zM572 398h1v1h-1zM573 399h1v1h-1zM573 400h1v1h-1zM574 401h1v1h-1zM575 402h1v1h-1zM576 403h1v1h-1zM577 404h1v1h-1zM578 405h1v1h-1zM579 406h1v1h-1zM580 407h1v1h-1zM580 408h1v1h-1zM580 409h2v1h-2zM579 410h1v1h-1zM582 410h1v1h-1zM579 411h1v1h-1zM583 411h1v1h-1zM579 412h1v1h-1zM582 412h1v1h-1zM578 413h1v1h-1zM582 413h1v1h-1zM578 414h1v1h-1zM581 414h1v1h-1zM581 415h1v1h-1zM580 416h1v1h-1zM580 417h1v1h-1z"/>
<path fill="#ffff00" d="M570 405h1v1h-1zM571 406h1v1h-1zM571 407h1v1h-1zM572 408h1v1h-1zM573 409h1v1h-1zM573 410h1v1h-1zM574 411h1v1h-1zM574 412h1v1h-1zM575 413h1v1h-1zM576 414h1v1h-1zM576 415h2v1h-2zM576 416h2v1h-2zM576 417h1v1h-1zM578 417h1v1h-1zM575 418h1v1h-1zM578 418h2v1h-2zM574 419h1v1h-1zM578 419h2v1h-2zM574 420h1v1h-1zM577 420h1v1h-1zM579 420h1v1h-1zM573 421h1v1h-1zM577 421h1v1h-1zM580 421h1v1h-1zM576 422h1v1h-1zM579 422h1v1h-1zM575 423h1v1h-1zM579 423h1v1h-1zM578 424h1v1h-1zM578 425h1v1h-1zM577 426h1v1h-1z"/>
<path fill="#ffff00" d="M570 414h1v1h-1zM571 415h1v1h-1zM571 416h1v1h-1zM572 417h1v1h-1zM572 418h1v1h-1zM573 419h1v1h-1zM574 420h1v1h-1zM574 421h1v1h-1zM575 422h1v1h-1zM575 423h1v1h-1zM576 424h1v1h-1zM576 425h1v1h-1zM575 426h1v1h-1zM577 426h1v1h-1zM575 427h1v1h-1zM578 427h1v1h-1zM574 428h1v1h-1zM578 428h1v1h-1zM574 429h1v1h-1zM577 429h1v1h-1zM579 429h1v1h-1zM573 430h1v1h-1zM576 430h1v1h-1zM579 430h1v1h-1zM576 431h1v1h-1zM580 431h1v1h-1zM575 432h1v1h-1zM579 432h1v1h-1zM574 433h1v1h-1zM578 433h1v1h-1zM578 434h1v1h-1zM577 435h1v1h-1zM576 436h1v1h-1z"/>
<path fill="#ffa500" d="M570 423h1v1h-1zM571 424h1v1h-1zM571 425h1v1h-1zM572 426h1v1h-1zM572 427h1v1h-1zM573 428h1v1h-1zM573 429h1v1h-1zM574 430h1v1h-1zM574 431h1v1h-1zM575 432h1v1h-1zM574 433h2v1h-2zM573 434h1v1h-1zM576 434h1v1h-1zM576 435h1v1h-1zM575 436h1v1h-1zM577 436h1v1h-1zM574 437h1v1h-1zM577 437h1v1h-1zM574 438h1v1h-1zM578 438h1v1h-1zM573 439h1v1h-1zM577 439h2v1h-2zM572 440h1v1h-1zM576 440h1v1h-1zM579 440h1v1h-1zM576 441h1v1h-1zM578 441h1v1h-1zM575 442h1v1h-1zM577 442h1v1h-1zM574 443h1v1h-1zM577 443h1v1h-1zM576 444h1v1h-1zM575 445h1v1h-1z"/>
<path fill="#00ffff" d="M570 432h1v1h-1zM571 433h1v1h-1zM571 434h1v1h-1zM572 435h1v1h-1zM572 436h1v1h-1zM573 437h1v1h-1zM573 438h1v1h-1zM574 439h1v1h-1zM574 440h1v1h-1zM575 441h1v1h-1zM575 442h1v1h-1zM576 443h1v1h-1zM576 444h1v1h-1zM577 445h1v1h-1zM577 446h2v1h-2zM577 447h2v1h-2zM576 448h1v1h-1zM578 448h1v1h-1zM576 449h1v1h-1zM579 449h1v1h-1zM575 450h1v1h-1zM578 450h1v1h-1zM574 451h1v1h-1zM577 451h1v1h-1zM577 452h1v1h-1zM576 453h1v1h-1zM575 454h1v1h-1z"/>
<path fill="#00ff00" d="M570 441h1v1h-1zM570 442h1v1h-1zM571 443h1v1h-1zM571 444h1v1h-1zM571 445h1v1h-1zM572 446h1v1h-1zM572 447h1v1h-1zM572 448h1v1h-1zM573 449h1v1h-1zM573 450h1v1h-1zM573 451h1v1h-1zM574 452h1v1h-1zM574 453h1v1h-1zM574 454h1v1h-1zM575 455h1v1h-1zM575 456h1v1h-1zM574 457h2v1h-2zM573 458h1v1h-1zM576 458h1v1h-1zM572 459h1v1h-1zM576 459h1v1h-1zM571 460h1v1h-1zM575 460h1v1h-1zM574 461h1v1h-1zM573 462h1v1h-1zM572 463h1v1h-1z"/>
<path fill="#00ff00" d="M570 450h1v1h-1zM571 451h1v1h-1zM571 452h1v1h-1zM572 453h1v1h-1zM572 454h1v1h-1zM573 455h1v1h-1zM573 456h1v1h-1zM574 457h1v1h-1zM574 458h1v1h-1zM575 459h1v1h-1zM575 460h1v1h-1zM576 461h1v1h-1zM576 462h2v1h-2zM576 463h2v1h-2zM575 464h1v1h-1zM577 464h1v1h-1zM575 465h1v1h-1zM578 465h1v1h-1zM574 466h1v1h-1zM577 466h1v1h-1zM573 467h1v1h-1zM576 467h1v1h-1zM576 468h1v1h-1zM575 469h1v1h-1zM574 470h1v1h-1z"/>
<path fill="#adff2f" d="M570 458h1v1h-1zM571 459h2v1h-2zM573 460h2v1h-2zM575 461h2v1h-2zM577 462h2v1h-2zM579 463h2v1h-2zM581 464h2v1h-2zM581 465h1v1h-1zM583 465h2v1h-2zM581 466h1v1h-1zM584 466h3v1h-3zM581 467h1v1h-1zM584 467h1v1h-1zM587 467h1v1h-1zM584 468h1v1h-1zM587 468h1v1h-1zM584 469h1v1h-1zM587 469h1v1h-1zM584 470h1v1h-1zM587 470h1v1h-1zM584 471h1v1h-1zM587 471h1v1h-1zM584 472h1v1h-1zM587 472h1v1h-1zM587 473h1v1h-1z"/>
<path fill="#adff2f" d="M570 476h1v1h-1zM571 477h1v1h-1zM571 478h1v1h-1zM572 479h1v1h-1zM573 480h1v1h-1zM573 481h1v1h-1zM574 482h1v1h-1zM575 483h1v1h-1zM575 484h1v1h-1zM576 485h1v1h-1zM576 486h1v1h-1zM577 487h2v1h-2zM577 488h2v1h-2zM577 489h2v1h-2zM576 490h1v1h-1zM579 490h1v1h-1zM578 491h1v1h-1zM580 491h1v1h-1zM578 492h1v1h-1zM580 492h1v1h-1zM577 493h1v1h-1zM581 493h1v1h-1zM577 494h1v1h-1zM580 494h1v1h-1zM576 495h1v1h-1zM580 495h1v1h-1zM579 496h1v1h-1zM579 497h1v1h-1zM578 498h1v1h-1z"/>
<path fill="#6495ed" d="M596 316h2v1h-2zM594 317h2v1h-2zM592 318h2v1h-2zM590 319h2v1h-2zM575 320h1v1h-1zM588 320h2v1h-2zM576 321h1v1h-1zM586 321h2v1h-2zM577 322h2v1h-2zM584 322h2v1h-2zM579 323h1v1h-1zM582 323h2v1h-2zM580 324h2v1h-2z"/>
<path fill="#00ff00" d="M597 324h1v1h-1zM598 325h1v1h-1zM598 326h1v1h-1zM599 327h1v1h-1zM600 328h1v1h-1zM600 329h1v1h-1zM601 330h1v1h-1zM602 331h1v1h-1zM603 332h1v1h-1zM603 333h1v1h-1zM604 334h1v1h-1zM605 335h1v1h-1zM605 336h1v1h-1zM606 337h1v1h-1zM605 338h1v1h-1zM607 338h1v1h-1zM605 339h1v1h-1zM607 339h1v1h-1zM604 340h1v1h-1zM608 340h1v1h-1zM604 341h1v1h-1zM607 341h1v1h-1zM603 342h1v1h-1zM607 342h1v1h-1zM603 343h1v1h-1zM606 343h1v1h-1zM606 344h1v1h-1zM605 345h1v1h-1z"/>
<path fill="#0000ff" d="M597 333h1v1h-1zM597 334h1v1h-1zM598 335h1v1h-1zM598 336h1v1h-1zM599 337h1v1h-1zM599 338h1v1h-1zM599 339h1v1h-1zM600 340h1v1h-1zM600 341h1v1h-1zM601 342h1v1h-1zM601 343h1v1h-1zM602 344h1v1h-1zM602 345h1v1h-1zM602 346h1v1h-1zM603 347h1v1h-1zM602 348h2v1h-2zM602 349h1v1h-1zM604 349h1v1h-1zM601 350h1v1h-1zM604 350h1v1h-1zM603 351h1v1h-1zM602 352h1v1h-1zM602 353h1v1h-1zM601 354h1v1h-1zM600 355h1v1h-1z"/>
<path fill="#6495ed" d="M597 342h1v1h-1zM597 343h1v1h-1zM597 344h1v1h-1zM597 345h1v1h-1zM597 346h1v1h-1zM597 347h1v1h-1zM597 348h1v1h-1zM597 349h1v1h-1zM597 350h1v1h-1zM597 351h1v1h-1zM598 352h1v1h-1zM598 353h1v1h-1zM598 354h1v1h-1zM598 355h1v1h-1zM598 356h1v1h-1zM598 357h1v1h-1zM598 358h1v1h-1zM598 359h1v1h-1zM598 360h1v1h-1zM598 361h1v1h-1zM596 362h2v1h-2zM594 363h2v1h-2zM592 364h2v1h-2z"/>
<path fill="#0000ff" d="M597 351h1v1h-1zM597 352h1v1h-1zM597 353h1v1h-1zM597 354h1v1h-1zM597 355h1v1h-1zM597 356h1v1h-1zM597 357h1v1h-1zM597 358h1v1h-1zM597 359h1v1h-1zM597 360h1v1h-1zM596 361h1v1h-1zM596 362h1v1h-1zM596 363h1v1h-1zM596 364h1v1h-1zM596 365h1v1h-1zM596 366h1v1h-1zM596 367h1v1h-1zM594 368h3v1h-3zM593 369h1v1h-1zM596 369h1v1h-1zM596 370h1v1h-1zM595 371h2v1h-2zM592 372h3v1h-3zM590 373h2v1h-2z"/>
<path fill="#0000ff" d="M597 360h1v1h-1zM597 361h1v1h-1zM597 362h1v1h-1zM597 363h1v1h-1zM597 364h1v1h-1zM596 365h1v1h-1zM596 366h1v1h-1zM596 367h1v1h-1zM596 368h1v1h-1zM596 369h1v1h-1zM596 370h1v1h-1zM596 371h1v1h-1zM596 372h1v1h-1zM596 373h1v1h-1zM596 374h1v1h-1zM595 375h1v1h-1zM594 376h2v1h-2zM592 377h2v1h-2zM595 377h1v1h-1zM595 378h1v1h-1zM594 379h2v1h-2zM591 380h3v1h-3zM589 381h2v1h-2z"/>
<path fill="#00ff00" d="M597 369h1v1h-1zM597 370h1v1h-1zM597 371h1v1h-1zM597 372h1v1h-1zM597 373h1v1h-1zM597 374h1v1h-1zM597 375h1v1h-1zM597 376h1v1h-1zM597 377h1v1h-1zM598 378h1v1h-1zM598 379h1v1h-1zM598 380h1v1h-1zM598 381h1v1h-1zM598 382h1v1h-1zM598 383h1v1h-1zM598 384h1v1h-1zM596 385h3v1h-3zM594 386h2v1h-2zM598 386h1v1h-1zM592 387h2v1h-2zM598 387h1v1h-1zM596 388h2v1h-2zM594 389h2v1h-2zM592 390h2v1h-2z"/>
<path fill="#adff2f" d="M597 378h1v1h-1zM597 379h1v1h-1zM597 380h1v1h-1zM597 381h1v1h-1zM598 382h1v1h-1zM598 383h1v1h-1zM598 384h1v1h-1zM598 385h1v1h-1zM598 386h1v1h-1zM598 387h1v1h-1zM599 388h1v1h-1zM599 389h1v1h-1zM599 390h1v1h-1zM599 391h1v1h-1zM597 392h3v1h-3zM596 393h1v1h-1zM599 393h1v1h-1zM599 394h2v1h-2zM598 395h1v1h-1zM600 395h1v1h-1zM596 396h2v1h-2zM600 396h1v1h-1zM595 397h1v1h-1zM600 397h1v1h-1zM594 398h1v1h-1zM598 398h2v1h-2zM597 399h1v1h-1zM595 400h2v1h-2zM594 401h1v1h-1z"/>
<path fill="#adff2f" d="M597 387h1v1h-1zM597 388h1v1h-1zM598 389h1v1h-1zM598 390h1v1h-1zM598 391h1v1h-1zM599 392h1v1h-1zM599 393h1v1h-1zM599 394h1v1h-1zM600 395h1v1h-1zM600 396h1v1h-1zM600 397h1v1h-1zM600 398h1v1h-1zM601 399h1v1h-1zM601 400h1v1h-1zM600 401h2v1h-2zM599 402h1v1h-1zM602 402h1v1h-1zM602 403h1v1h-1zM601 404h2v1h-2zM599 405h2v1h-2zM603 405h1v1h-1zM598 406h1v1h-1zM603 406h1v1h-1zM597 407h1v1h-1zM602 407h1v1h-1zM601 408h1v1h-1zM600 409h1v1h-1zM599 410h1v1h-1zM598 411h1v1h-1z"/>
<path fill="#adff2f" d="M597 396h1v1h-1zM598 397h1v1h-1zM598 398h1v1h-1zM599 399h1v1h-1zM599 400h1v1h-1zM600 401h1v1h-1zM601 402h1v1h-1zM601 403h1v1h-1zM602 404h1v1h-1zM602 405h1v1h-1zM603 406h1v1h-1zM603 407h1v1h-1zM604 408h1v1h-1zM603 409h1v1h-1zM605 409h1v1h-1zM602 410h1v1h-1zM605 410h1v1h-1zM604 411h1v1h-1zM606 411h1v1h-1zM604 412h1v1h-1zM606 412h1v1h-1zM603 413h1v1h-1zM607 413h1v1h-1zM603 414h1v1h-1zM606 414h1v1h-1zM602 415h1v1h-1zM605 415h1v1h-1zM602 416h1v1h-1zM605 416h1v1h-1zM604 417h1v1h-1zM603 418h1v1h-1z"/>
<path fill="#adff2f" d="M597 405h1v1h-1zM598 406h1v1h-1zM598 407h1v1h-1zM599 408h1v1h-1zM599 409h1v1h-1zM600 410h1v1h-1zM600 411h1v1h-1zM601 412h1v1h-1zM601 413h1v1h-1zM602 414h1v1h-1zM603 415h1v1h-1zM603 416h1v1h-1zM603 417h2v1h-2zM602 418h1v1h-1zM604 418h1v1h-1zM602 419h1v1h-1zM605 419h1v1h-1zM601 420h1v1h-1zM605 420h1v1h-1zM604 421h1v1h-1zM606 421h1v1h-1zM603 422h1v1h-1zM606 422h1v1h-1zM603 423h1v1h-1zM607 423h1v1h-1zM602 424h1v1h-1zM606 424h1v1h-1zM601 425h1v1h-1zM605 425h1v1h-1zM605 426h1v1h-1zM604 427h1v1h-1zM603 428h1v1h-1z"/>
<path fill="#ffa500" d="M597 414h1v1h-1zM598 415h1v1h-1zM598 416h1v1h-1zM599 417h1v1h-1zM599 418h1v1h-1zM600 419h1v1h-1zM600 420h1v1h-1zM601 421h1v1h-1zM601 422h1v1h-1zM602 423h1v1h-1zM601 424h2v1h-2zM600 425h1v1h-1zM603 425h1v1h-1zM602 426h2v1h-2zM601 427h1v1h-1zM604 427h1v1h-1zM601 428h1v1h-1zM604 428h2v1h-2zM600 429h1v1h-1zM604 429h2v1h-2zM599 430h1v1h-1zM603 430h1v1h-1zM605 430h1v1h-1zM603 431h1v1h-1zM606 431h1v1h-1zM602 432h1v1h-1zM605 432h1v1h-1zM601 433h1v1h-1zM604 433h1v1h-1zM604 434h1v1h-1zM603 435h1v1h-1zM602 436h1v1h-1z"/>
<path fill="#00ffff" d="M597 423h1v1h-1zM598 424h1v1h-1zM598 425h1v1h-1zM599 426h1v1h-1zM599 427h1v1h-1zM600 428h1v1h-1zM600 429h1v1h-1zM601 430h1v1h-1zM601 431h1v1h-1zM602 432h1v1h-1zM602 433h1v1h-1zM603 434h1v1h-1zM603 435h1v1h-1zM604 436h1v1h-1zM604 437h1v1h-1zM604 438h2v1h-2zM603 439h1v1h-1zM605 439h1v1h-1zM602 440h1v1h-1zM606 440h1v1h-1zM602 441h1v1h-1zM606 441h1v1h-1zM601 442h1v1h-1zM605 442h1v1h-1zM600 443h1v1h-1zM603 443h2v1h-2zM602 444h1v1h-1zM601 445h1v1h-1z"/>
<path fill="#0000ff" d="M597 432h1v1h-1zM598 433h1v1h-1zM598 434h1v1h-1zM599 435h1v1h-1zM599 436h1v1h-1zM600 437h1v1h-1zM600 438h1v1h-1zM601 439h1v1h-1zM601 440h1v1h-1zM602 441h1v1h-1zM602 442h1v1h-1zM603 443h1v1h-1zM603 444h1v1h-1zM604 445h1v1h-1zM604 446h1v1h-1zM603 447h1v1h-1zM605 447h1v1h-1zM603 448h1v1h-1zM605 448h1v1h-1zM602 449h1v1h-1zM606 449h1v1h-1zM605 450h1v1h-1zM604 451h1v1h-1zM604 452h1v1h-1zM603 453h1v1h-1zM602 454h1v1h-1z"/>
<path fill="#00ffff" d="M597 441h1v1h-1zM598 442h1v1h-1zM599 443h1v1h-1zM599 444h1v1h-1zM600 445h1v1h-1zM601 446h1v1h-1zM602 447h1v1h-1zM603 448h1v1h-1zM603 449h1v1h-1zM604 450h1v1h-1zM605 451h1v1h-1zM606 452h1v1h-1zM607 453h1v1h-1zM607 454h1v1h-1zM606 455h1v1h-1zM608 455h1v1h-1zM606 456h1v1h-1zM609 456h1v1h-1zM605 457h1v1h-1zM608 457h1v1h-1zM605 458h1v1h-1zM608 458h1v1h-1zM604 459h1v1h-1zM607 459h1v1h-1zM607 460h1v1h-1zM606 461h1v1h-1zM606 462h1v1h-1z"/>
<path fill="#ffa500" d="M597 450h1v1h-1zM598 451h1v1h-1zM598 452h1v1h-1zM599 453h1v1h-1zM599 454h1v1h-1zM600 455h1v1h-1zM600 456h1v1h-1zM601 457h1v1h-1zM602 458h1v1h-1zM602 459h1v1h-1zM603 460h1v1h-1zM603 461h1v1h-1zM602 462h1v1h-1zM604 462h1v1h-1zM601 463h1v1h-1zM604 463h2v1h-2zM601 464h1v1h-1zM604 464h2v1h-2zM600 465h1v1h-1zM603 465h1v1h-1zM605 465h1v1h-1zM599 466h1v1h-1zM603 466h1v1h-1zM606 466h1v1h-1zM602 467h1v1h-1zM605 467h1v1h-1zM601 468h1v1h-1zM604 468h1v1h-1zM604 469h1v1h-1zM603 470h1v1h-1zM602 471h1v1h-1z"/>
<path fill="#ffff00" d="M597 485h1v1h-1zM597 486h1v1h-1zM598 487h1v1h-1zM598 488h1v1h-1zM598 489h1v1h-1zM598 490h1v1h-1zM599 491h1v1h-1zM599 492h1v1h-1zM599 493h1v1h-1zM600 494h1v1h-1zM600 495h1v1h-1zM600 496h1v1h-1zM600 497h1v1h-1zM599 498h1v1h-1zM601 498h1v1h-1zM598 499h1v1h-1zM601 499h1v1h-1zM597 500h1v1h-1zM601 500h1v1h-1zM596 501h1v1h-1zM600 501h2v1h-2zM598 502h2v1h-2zM602 502h1v1h-1zM597 503h1v1h-1zM602 503h1v1h-1zM596 504h1v1h-1zM601 504h1v1h-1zM599 505h2v1h-2zM598 506h1v1h-1zM597 507h1v1h-1z"/>
<path fill="#6495ed" d="M633 332h10v1h-10zM623 333h10v1h-10zM643 333h1v1h-1zM643 334h1v1h-1zM644 335h1v1h-1zM644 336h1v1h-1zM645 337h1v1h-1z"/>
<path fill="#a020f0" d="M623 378h1v1h-1zM624 379h1v1h-1zM625 380h1v1h-1zM626 381h1v1h-1zM627 382h1v1h-1zM628 383h1v1h-1zM629 384h1v1h-1zM630 385h1v1h-1zM630 386h1v1h-1zM631 387h1v1h-1zM632 388h1v1h-1zM633 389h1v1h-1zM634 390h1v1h-1zM634 391h2v1h-2zM633 392h1v1h-1zM636 392h1v1h-1zM633 393h1v1h-1z"/>
<path fill="#6495ed" d="M623 396h1v1h-1zM624 397h2v1h-2zM626 398h1v1h-1zM627 399h2v1h-2zM629 400h2v1h-2zM631 401h1v1h-1zM632 402h2v1h-2zM634 403h1v1h-1zM635 404h2v1h-2zM637 405h2v1h-2zM639 406h1v1h-1zM639 407h1v1h-1zM639 408h1v1h-1zM639 409h1v1h-1zM639 410h1v1h-1zM639 411h1v1h-1zM639 412h1v1h-1z"/>
<path fill="#0000ff" d="M623 414h1v1h-1zM624 415h1v1h-1zM625 416h1v1h-1zM626 417h1v1h-1zM627 418h1v1h-1zM628 419h1v1h-1zM629 420h1v1h-1zM630 421h1v1h-1zM631 422h1v1h-1zM632 423h1v1h-1zM633 424h1v1h-1zM634 425h1v1h-1zM635 426h1v1h-1zM635 427h2v1h-2zM634 428h1v1h-1zM637 428h1v1h-1zM634 429h1v1h-1zM637 429h1v1h-1zM636 430h1v1h-1zM636 431h1v1h-1zM636 432h1v1h-1zM635 433h1v1h-1zM635 434h1v1h-1z"/>
<path fill="#ffff00" d="M637 430h7v1h-7zM628 431h11v1h-11zM641 431h1v1h-1zM644 431h1v1h-1zM623 432h5v1h-5zM638 432h1v1h-1zM641 432h1v1h-1zM644 432h1v1h-1zM639 433h1v1h-1zM642 433h1v1h-1zM645 433h1v1h-1zM639 434h1v1h-1zM642 434h1v1h-1zM645 434h1v1h-1zM640 435h1v1h-1zM643 435h1v1h-1zM646 435h1v1h-1zM640 436h1v1h-1zM643 436h1v1h-1zM646 436h1v1h-1z"/>
<path fill="#00ff00" d="M650 324h1v1h-1zM650 325h1v1h-1zM649 326h1v1h-1zM649 327h1v1h-1zM648 328h1v1h-1zM648 329h1v1h-1zM648 330h1v1h-1zM647 331h1v1h-1zM647 332h1v1h-1zM646 333h1v1h-1zM646 334h1v1h-1zM646 335h1v1h-1zM645 336h1v1h-1zM645 337h1v1h-1zM645 338h1v1h-1zM643 339h2v1h-2zM640 340h3v1h-3zM644 340h1v1h-1zM638 341h2v1h-2zM643 341h1v1h-1zM642 342h2v1h-2zM638 343h4v1h-4zM636 344h2v1h-2z"/>
<path fill="#0000ff" d="M650 441h2v1h-2zM652 442h2v1h-2zM654 443h3v1h-3zM657 444h2v1h-2zM659 445h3v1h-3zM662 446h3v1h-3zM665 447h2v1h-2zM665 448h1v1h-1zM667 448h2v1h-2zM665 449h1v1h-1zM668 449h1v1h-1zM665 450h1v1h-1zM668 450h1v1h-1zM668 451h1v1h-1zM668 452h1v1h-1zM668 453h1v1h-1zM668 454h1v1h-1z"/>
<path fill="#adff2f" d="M650 450h2v1h-2zM652 451h3v1h-3zM655 452h2v1h-2zM657 453h3v1h-3zM660 454h3v1h-3zM663 455h2v1h-2zM663 456h1v1h-1zM665 456h3v1h-3zM663 457h1v1h-1zM666 457h1v1h-1zM668 457h2v1h-2zM663 458h1v1h-1zM666 458h1v1h-1zM669 458h1v1h-1zM666 459h1v1h-1zM669 459h1v1h-1zM666 460h1v1h-1zM669 460h1v1h-1zM666 461h1v1h-1zM669 461h1v1h-1zM666 462h1v1h-1zM669 462h1v1h-1zM666 463h1v1h-1zM669 463h1v1h-1zM669 464h1v1h-1z"/>
<path fill="#ffff00" d="M676 450h2v1h-2zM678 451h3v1h-3zM681 452h3v1h-3zM684 453h4v1h-4zM688 454h3v1h-3zM689 455h1v1h-1zM691 455h3v1h-3zM689 456h1v1h-1zM692 456h1v1h-1zM694 456h2v1h-2zM689 457h1v1h-1zM692 457h1v1h-1zM695 457h1v1h-1zM689 458h1v1h-1zM692 458h1v1h-1zM695 458h1v1h-1zM689 459h1v1h-1zM692 459h1v1h-1zM695 459h1v1h-1zM689 460h1v1h-1zM692 460h1v1h-1zM695 460h1v1h-1zM692 461h1v1h-1zM695 461h1v1h-1zM695 462h1v1h-1z"/>
<path fill="#adff2f" d="M676 467h1v1h-1zM677 468h1v1h-1zM677 469h1v1h-1zM678 470h1v1h-1zM678 471h1v1h-1zM679 472h1v1h-1zM679 473h1v1h-1zM680 474h1v1h-1zM680 475h1v1h-1zM681 476h1v1h-1zM681 477h1v1h-1zM682 478h1v1h-1zM681 479h2v1h-2zM681 480h1v1h-1zM683 480h1v1h-1zM680 481h1v1h-1zM683 481h1v1h-1zM682 482h1v1h-1zM684 482h1v1h-1zM681 483h1v1h-1zM684 483h1v1h-1zM681 484h1v1h-1zM685 484h1v1h-1zM680 485h1v1h-1zM684 485h1v1h-1zM679 486h1v1h-1zM683 486h1v1h-1zM683 487h1v1h-1zM682 488h1v1h-1zM681 489h1v1h-1z"/>
<path fill="#0000ff" d="M721 400h2v1h-2zM717 401h4v1h-4zM723 401h1v1h-1zM713 402h4v1h-4zM720 402h1v1h-1zM724 402h1v1h-1zM709 403h4v1h-4zM721 403h1v1h-1zM724 403h1v1h-1zM705 404h4v1h-4zM725 404h1v1h-1zM703 405h2v1h-2zM726 405h1v1h-1z"/>
<path fill="#a020f0" d="M703 423h4v1h-4zM707 424h6v1h-6zM713 425h7v1h-7zM719 426h4v1h-4zM720 427h1v1h-1zM720 428h1v1h-1zM720 429h1v1h-1z"/>
<path fill="#00ff00" d="M703 467h1v1h-1zM704 468h1v1h-1zM705 469h1v1h-1zM706 470h1v1h-1zM706 471h1v1h-1zM707 472h1v1h-1zM708 473h1v1h-1zM709 474h1v1h-1zM710 475h1v1h-1zM711 476h1v1h-1zM712 477h1v1h-1zM713 478h1v1h-1zM713 479h2v1h-2zM714 480h1v1h-1zM713 481h1v1h-1zM715 481h1v1h-1zM713 482h1v1h-1zM716 482h1v1h-1zM713 483h1v1h-1zM716 483h1v1h-1zM712 484h1v1h-1zM715 484h1v1h-1zM712 485h1v1h-1zM715 485h1v1h-1zM715 486h1v1h-1zM714 487h1v1h-1zM714 488h1v1h-1z"/>
<path fill="#ff0000" d="M567 316h4v1h-4zM561 317h6v1h-6zM555 318h6v1h-6zM551 319h4v1h-4z"/>
<path fill="#ff0000" d="M550 315h1v6h-1zM551 316h1v5h-1zM552 317h1v3h-1zM553 318h1v2h-1z"/>
<rect x="778" y="64" width="21" height="1" fill="#fff"/><rect x="795" y="64" width="4" height="6" fill="#fff"/>
<rect x="778" y="84" width="21" height="1" fill="#fff"/><polygon points="795,84.5 799,84.5 798,90" fill="#fff"/>
<rect x="778" y="103" width="21" height="1" fill="#fff"/><path fill="#ffffff" d="M798 103h1v1h-1zM798 104h1v1h-1zM799 105h1v1h-1zM799 106h1v1h-1zM800 107h1v1h-1zM800 108h1v1h-1zM801 109h1v1h-1zM801 110h1v1h-1z"/>
<rect x="778" y="124" width="21" height="1" fill="#fff"/><rect x="795" y="125" width="2" height="1" fill="#fff"/><rect x="796" y="126" width="1" height="1" fill="#fff"/>
</g>
</svg></body></html>
